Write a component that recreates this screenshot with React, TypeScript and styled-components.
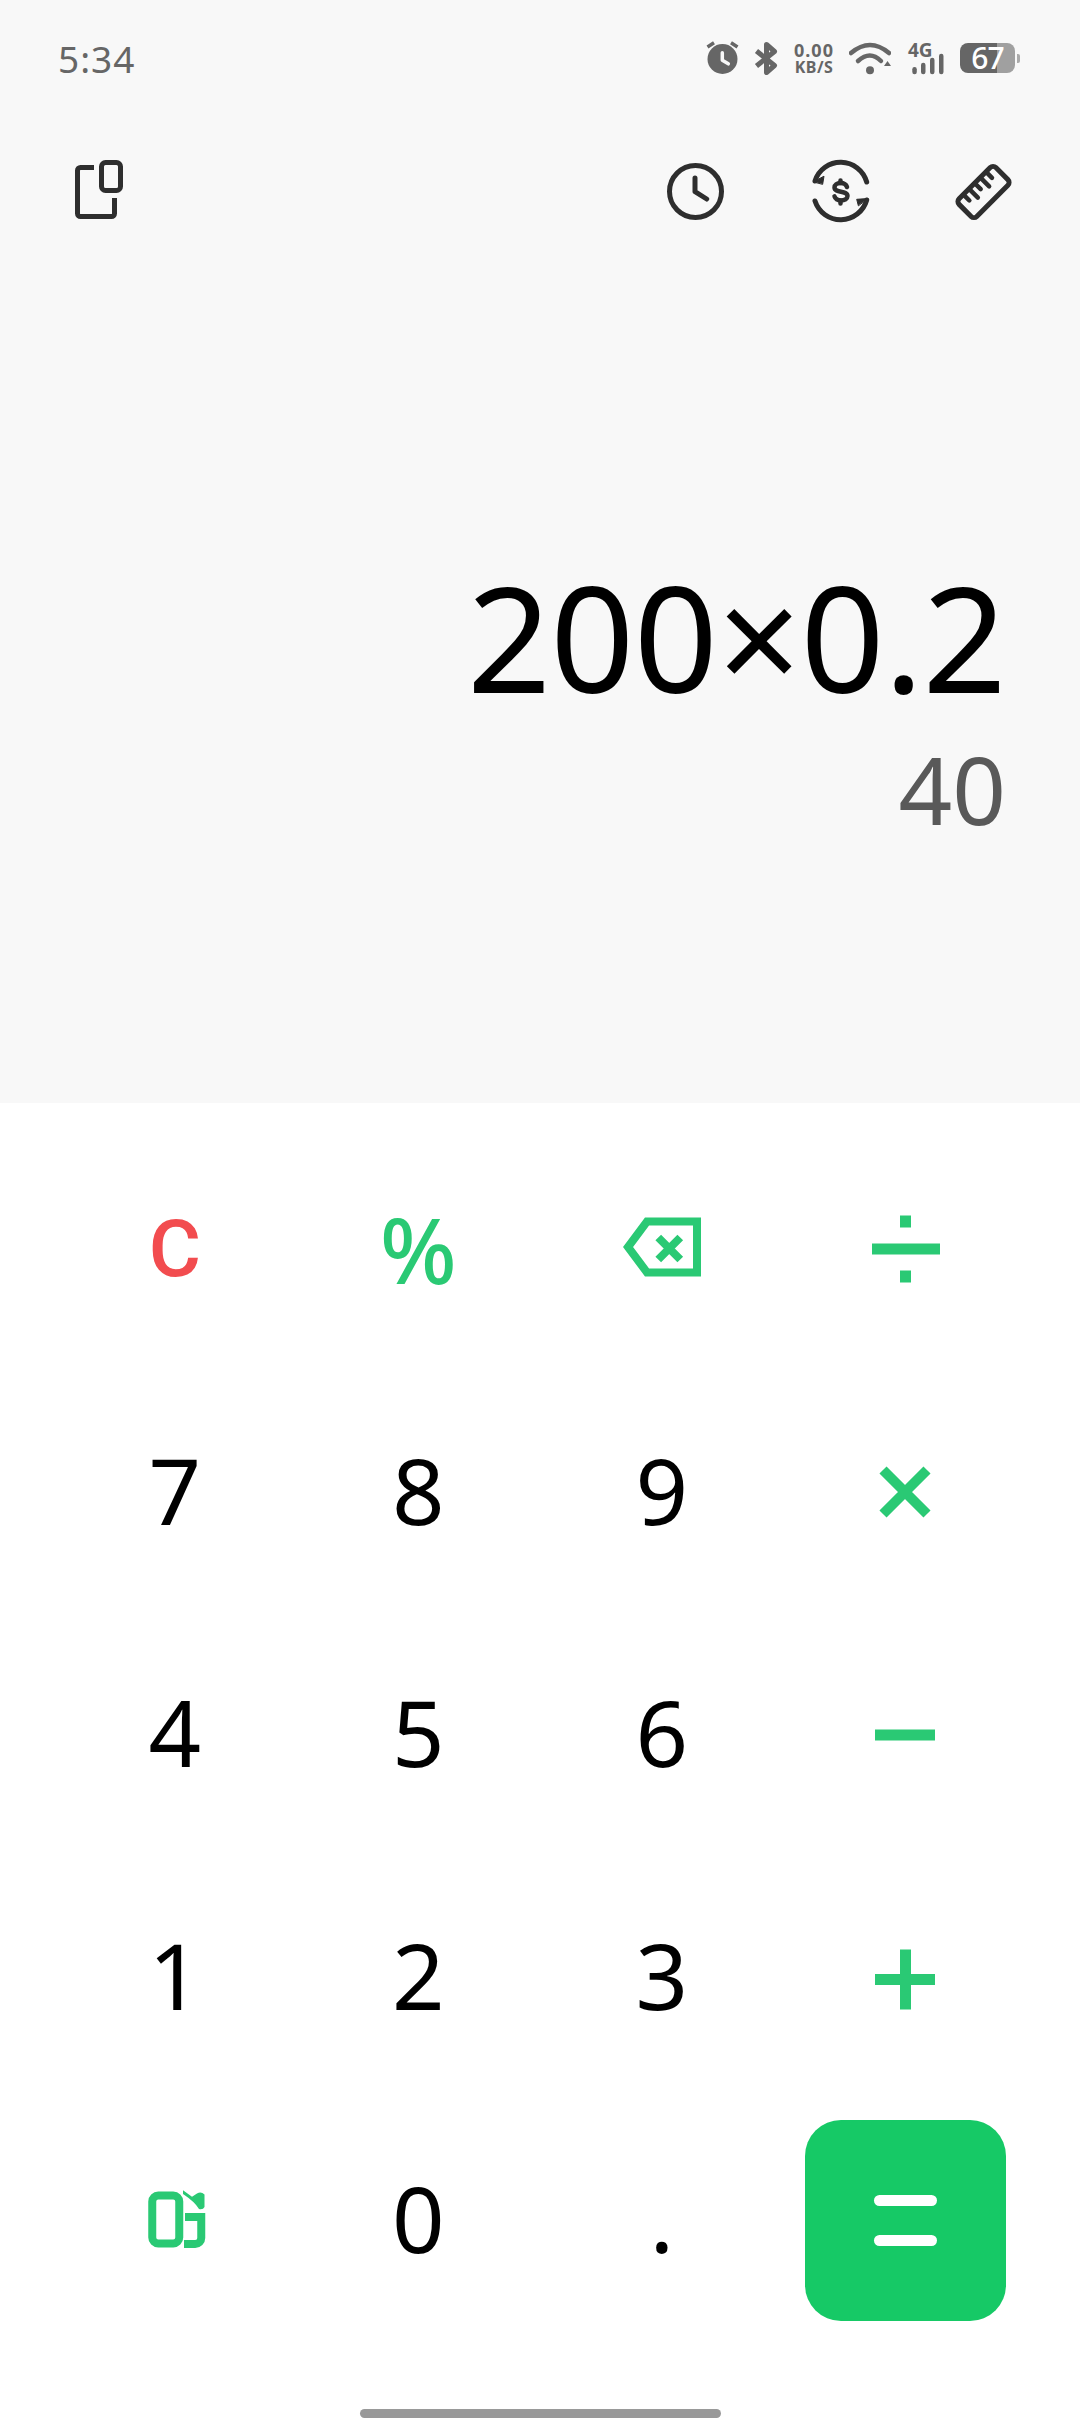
import React from 'react';
import styled, { createGlobalStyle } from 'styled-components';

const GlobalStyle = createGlobalStyle`
  html, body {
    margin: 0;
    padding: 0;
    background: #fff;
  }
  * { box-sizing: border-box; }
`;

const GREEN = '#2ac974';
const ICON_DARK = '#2e2e2e';
const STATUS_GREY = '#666666';

const Page = styled.div`
  width: 1080px;
  height: 2436px;
  overflow: hidden;
  display: flex;
  flex-direction: column;
  font-family: 'Noto Sans', 'Open Sans', sans-serif;
`;

const TopPanel = styled.div`
  height: 1103px;
  background: #f8f8f8;
  display: flex;
  flex-direction: column;
`;

const StatusBar = styled.div`
  height: 116px;
  padding: 0 60px 0 58px;
  display: flex;
  align-items: center;
  justify-content: space-between;
`;

const Time = styled.div`
  font-size: 37px;
  color: ${STATUS_GREY};
  letter-spacing: 1px;
`;

const StatusIcons = styled.div`
  display: flex;
  align-items: center;
  gap: 15px;
`;

const SpeedMeter = styled.div`
  width: 40px;
  display: flex;
  flex-direction: column;
  align-items: center;
  color: ${STATUS_GREY};
  font-weight: 700;
`;

const SpeedValue = styled.span`
  font-size: 18px;
  line-height: 19px;
  letter-spacing: 1px;
`;

const SpeedUnit = styled.span`
  font-size: 16px;
  line-height: 15px;
  letter-spacing: 0.5px;
`;

const SignalWrap = styled.div`
  position: relative;
  width: 39px;
  height: 33px;
`;

const SignalLabel = styled.span`
  position: absolute;
  left: 2px;
  top: -3px;
  font-size: 19px;
  line-height: 22px;
  font-weight: 700;
  color: ${STATUS_GREY};
`;

const BatteryWrap = styled.div`
  display: flex;
  align-items: center;
  gap: 2px;
  width: 60px;
`;

const BatteryBody = styled.div<{ $level: number }>`
  width: 55px;
  height: 30px;
  border-radius: 8px;
  display: flex;
  align-items: center;
  justify-content: center;
  color: #fff;
  font-size: 30px;
  font-weight: 500;
  line-height: 30px;
  letter-spacing: -1px;
  background: linear-gradient(
    to right,
    #666 ${(p) => p.$level}%,
    #a0a0a0 ${(p) => p.$level}%
  );
`;

const BatteryTip = styled.div`
  width: 3px;
  height: 9px;
  border-radius: 0 2px 2px 0;
  background: #aaa;
`;

const Toolbar = styled.div`
  padding: 43px 64px 0;
  display: flex;
  justify-content: space-between;
`;

const ToolGroup = styled.div`
  display: flex;
  gap: 80px;
`;

const ToolIcon = styled.svg.attrs({ viewBox: '0 0 64 64', fill: 'none' })`
  width: 64px;
  height: 64px;
  display: block;
  stroke: ${ICON_DARK};
  stroke-width: 5;
`;

const Readout = styled.div`
  margin-top: auto;
  padding: 0 74px 259px 0;
  display: flex;
  flex-direction: column;
  align-items: flex-end;
`;

const Expression = styled.div`
  font-size: 147px;
  line-height: 170px;
  letter-spacing: -0.7px;
  color: #000;
`;

const Result = styled.div`
  font-size: 94px;
  line-height: 110px;
  color: #595959;
  margin-top: 13px;
`;

const Keypad = styled.div`
  padding: 25px 0 0 53px;
  display: grid;
  grid-template-columns: repeat(4, 243.5px);
  grid-auto-rows: 242.8px;
  background: #fff;
`;

const Key = styled.div<{ $tone?: 'digit' | 'clear' | 'accent' }>`
  display: flex;
  align-items: center;
  justify-content: center;
  font-size: 92px;
  font-weight: 400;
  padding-bottom: ${(p) => (p.$tone === 'digit' ? '6px' : '0')};
  color: ${(p) =>
    p.$tone === 'clear' ? '#f24c4f' : p.$tone === 'accent' ? GREEN : '#000'};
`;

const ClearLabel = styled.span`
  font-family: Roboto, sans-serif;
  font-size: 80px;
  font-weight: 500;
`;

const PercentLabel = styled.span`
  font-size: 90px;
  font-weight: 500;
`;

const KeyIcon = styled.svg.attrs({ viewBox: '0 0 80 80' })`
  width: 80px;
  height: 80px;
  display: block;
`;

const EqualsButton = styled.div`
  width: 201px;
  height: 201px;
  border-radius: 36px;
  background: #16c966;
  display: flex;
  flex-direction: column;
  align-items: center;
  justify-content: center;
  gap: 29px;
`;

const EqualsBar = styled.div`
  width: 63px;
  height: 11px;
  border-radius: 6px;
  background: #fff;
`;

const HomeBar = styled.div`
  width: 361px;
  height: 9px;
  margin: 67px auto 0;
  border-radius: 5px;
  background: #999;
`;

const AlarmIcon = () => (
  <svg width="33" height="34" viewBox="0 0 33 34" fill="none">
    <circle cx="16.5" cy="18" r="15" fill={STATUS_GREY} />
    <path d="M1.5 6L8 1.8M25 1.8L31.5 6" stroke={STATUS_GREY} strokeWidth="3.5" />
    <path d="M16.3 11.8V19.2L22.3 22.8" stroke="#f8f8f8" strokeWidth="3.5" strokeLinecap="round" strokeLinejoin="round" />
  </svg>
);

const BluetoothIcon = () => (
  <svg width="25" height="33" viewBox="0 0 25 33" fill="none">
    <path
      d="M2.5 9L20.5 23.5L12.5 30.5V2.5L20.5 9.5L2.5 24"
      stroke={STATUS_GREY}
      strokeWidth="5"
      strokeLinejoin="round"
    />
  </svg>
);

const WifiIcon = () => (
  <svg width="42" height="33" viewBox="0 0 42 33" fill="none">
    <path d="M2 11Q21 -5 40 11" stroke={STATUS_GREY} strokeWidth="4.5" strokeLinecap="round" />
    <path d="M9 19Q21 8 32 19" stroke={STATUS_GREY} strokeWidth="4.5" strokeLinecap="round" />
    <circle cx="21" cy="28.3" r="4" fill={STATUS_GREY} />
    <path d="M35 24H42L38.5 19Z" fill={STATUS_GREY} />
  </svg>
);

const SignalBars = () => (
  <svg width="39" height="33" viewBox="0 0 39 33" fill={STATUS_GREY}>
    <rect x="6.3" y="25" width="4.5" height="7.3" rx="2.2" />
    <rect x="15" y="20.7" width="4.5" height="11.6" rx="2.2" />
    <rect x="24" y="15.7" width="4.5" height="16.6" rx="2.2" />
    <rect x="33" y="11.7" width="4.5" height="20.6" rx="2.2" />
  </svg>
);

const CompactIcon = () => (
  <ToolIcon>
    <rect x="37.5" y="3.5" width="19" height="28" rx="4" />
    <path d="M30 8.5H16.5a3 3 0 0 0-3 3V54.5a3 3 0 0 0 3 3H47.5a3 3 0 0 0 3-3V39" />
  </ToolIcon>
);

const HistoryIcon = () => (
  <ToolIcon strokeLinecap="round" strokeLinejoin="round">
    <circle cx="31.5" cy="32.5" r="26" />
    <path d="M31 19V32.7L42.7 40" />
  </ToolIcon>
);

const CurrencyIcon = () => (
  <ToolIcon strokeLinecap="round" strokeLinejoin="round">
    <path d="M7 22A27 27 0 0 1 58.7 23" />
    <path d="M7 42A27 27 0 0 0 58.7 41" />
    <path d="M5.5 22.7L16 17.2L14.7 25Z" fill={ICON_DARK} strokeWidth="1" />
    <path d="M59.5 39.6L48.7 40.3L50.3 46.5Z" fill={ICON_DARK} strokeWidth="1" />
    <path d="M39 28c-1-3-3.5-4-6.5-4-3.5 0-6 1.8-6 4.4 0 6 13 2.6 13 8.6 0 2.8-3 4.4-6.5 4.4-3 0-5.5-1-6.5-4" strokeWidth="4.5" />
    <path d="M32.5 21.5V24M32.5 41.4V44.5" strokeWidth="4.5" />
  </ToolIcon>
);

const RulerIcon = () => (
  <ToolIcon strokeLinecap="round">
    <g transform="rotate(-45 31.5 33)">
      <rect x="5.5" y="20.5" width="52" height="25" rx="4" />
      <path d="M15.5 21V29M23.5 21V33M31.5 21V29M39.5 21V33M47.5 21V29" strokeWidth="4.5" />
    </g>
  </ToolIcon>
);

const BackspaceIcon = () => (
  <KeyIcon fill="none" stroke={GREEN} strokeWidth="8">
    <path d="M25 12.5H75V63.5H25L6 38Z" />
    <path d="M36.25 28.5L58.25 50.5M58.25 28.5L36.25 50.5" />
  </KeyIcon>
);

const DivideIcon = () => (
  <KeyIcon fill={GREEN}>
    <rect x="7" y="34.5" width="68" height="11" />
    <rect x="35" y="6.5" width="11" height="12" />
    <rect x="35" y="61.5" width="11" height="12" />
  </KeyIcon>
);

const TimesIcon = () => (
  <KeyIcon fill="none" stroke={GREEN} strokeWidth="10">
    <path d="M18 18L62 62M62 18L18 62" />
  </KeyIcon>
);

const MinusIcon = () => (
  <KeyIcon fill={GREEN}>
    <rect x="10" y="34.5" width="60" height="11" />
  </KeyIcon>
);

const PlusIcon = () => (
  <KeyIcon fill={GREEN}>
    <rect x="10" y="36" width="60" height="11" />
    <rect x="35" y="11.5" width="11" height="60" />
  </KeyIcon>
);

const ScientificIcon = () => (
  <KeyIcon fill="none" stroke={GREEN} strokeWidth="8">
    <rect x="17.25" y="14.5" width="27" height="48" rx="6" />
    <path d="M50 36H66.25V57a6 6 0 0 1-6 6H49" />
    <path
      d="M48 9.2L57 15.8L62 12.5Q66 10 69.5 13.5V26Q68 29 64 28Q60 21 48 13Z"
      fill={GREEN}
      stroke="none"
    />
  </KeyIcon>
);

const App: React.FC = () => {
  const batteryLevel = 67;

  return (
    <Page>
      <GlobalStyle />
      <TopPanel>
        <StatusBar>
          <Time>5:34</Time>
          <StatusIcons>
            <AlarmIcon />
            <BluetoothIcon />
            <SpeedMeter>
              <SpeedValue>0.00</SpeedValue>
              <SpeedUnit>KB/S</SpeedUnit>
            </SpeedMeter>
            <WifiIcon />
            <SignalWrap>
              <SignalBars />
              <SignalLabel>4G</SignalLabel>
            </SignalWrap>
            <BatteryWrap>
              <BatteryBody $level={batteryLevel}>{batteryLevel}</BatteryBody>
              <BatteryTip />
            </BatteryWrap>
          </StatusIcons>
        </StatusBar>

        <Toolbar>
          <CompactIcon />
          <ToolGroup>
            <HistoryIcon />
            <CurrencyIcon />
            <RulerIcon />
          </ToolGroup>
        </Toolbar>

        <Readout>
          <Expression>200×0.2</Expression>
          <Result>40</Result>
        </Readout>
      </TopPanel>

      <Keypad>
        <Key $tone="clear"><ClearLabel>C</ClearLabel></Key>
        <Key $tone="accent"><PercentLabel>%</PercentLabel></Key>
        <Key><BackspaceIcon /></Key>
        <Key><DivideIcon /></Key>

        <Key $tone="digit">7</Key>
        <Key $tone="digit">8</Key>
        <Key $tone="digit">9</Key>
        <Key><TimesIcon /></Key>

        <Key $tone="digit">4</Key>
        <Key $tone="digit">5</Key>
        <Key $tone="digit">6</Key>
        <Key><MinusIcon /></Key>

        <Key $tone="digit">1</Key>
        <Key $tone="digit">2</Key>
        <Key $tone="digit">3</Key>
        <Key><PlusIcon /></Key>

        <Key><ScientificIcon /></Key>
        <Key $tone="digit">0</Key>
        <Key $tone="digit">.</Key>
        <Key>
          <EqualsButton>
            <EqualsBar />
            <EqualsBar />
          </EqualsButton>
        </Key>
      </Keypad>

      <HomeBar />
    </Page>
  );
};

export default App;
